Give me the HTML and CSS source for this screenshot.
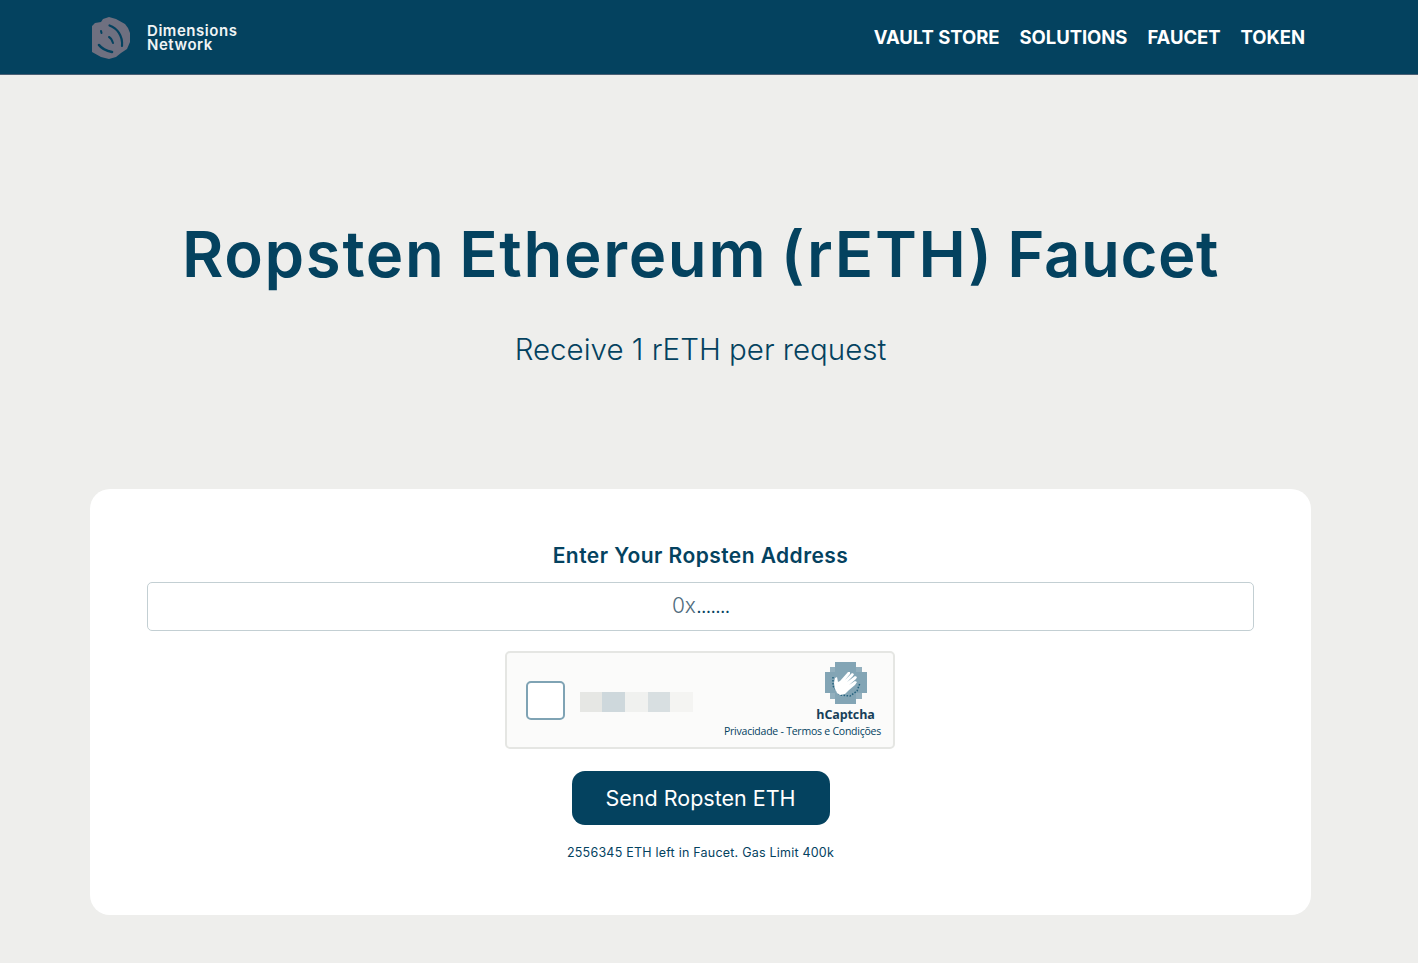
FILE: index.html
```html
<!DOCTYPE html>
<html lang="en">
<head>
<meta charset="utf-8">
<title>Ropsten Ethereum (rETH) Faucet</title>
<link rel="stylesheet" href="styles.css">
</head>
<body>
<header class="header">
  <a class="brand">
    <svg class="brand-mark" viewBox="0 0 40 44" width="40" height="44">
      <path fill="#6f7080" d="M1 10 4 7 10 6 12 3 18 1 25 3 34 8 37 12 39 17V26L36 33 30 37 25 41 18 43 10 41 1 36Z"/>
      <g fill="none" stroke="#04425f" stroke-linecap="round">
        <path stroke-width="2.200" d="M18.500 9.500C26 12 32 20 31 30"/>
        <path stroke-width="2.600" d="M8 29C11 33 16 35 21 36"/>
        <path stroke-width="2" d="M10 15l.500 2M18 21c2 1 3 3 4 6"/>
      </g>
    </svg>
    <span class="brand-name"><span>Dimensions</span><span>Network</span></span>
  </a>
  <nav class="nav">
    <a>VAULT STORE</a><a>SOLUTIONS</a><a>FAUCET</a><a>TOKEN</a>
  </nav>
</header>
<main class="main">
  <h1 class="title">Ropsten Ethereum (rETH) <span class="title-end">Faucet</span></h1>
  <p class="subtitle">Receive 1 rETH per request</p>
  <section class="card">
    <label class="label" for="address">Enter Your Ropsten Address</label>
    <div class="field" id="address"><span class="field-zero">0x</span><span class="field-dots">.......</span></div>
    <div class="captcha">
      <span class="checkbox"></span>
      <span class="mosaic"><i class="tile tile-warm"></i><i class="tile tile-blue"></i><i class="tile tile-pale"></i><i class="tile tile-cool"></i><i class="tile tile-faint"></i></span>
      <div class="captcha-brand">
        <svg class="captcha-logo" viewBox="0 0 42 42" width="42" height="42">
          <path fill="#83a5b5" d="M10 0H31V5H37V10H42V31H37V37H31V42H10V37H5V31H0V10H5V5H10Z"/>
          <path fill="#93b0be" d="M5 5h5v5H5zM31 5h6v5h-6zM5 31h5v6H5zM31 31h6v6h-6z"/>
          <path fill="none" stroke="#24617d" stroke-width="1.500" stroke-dasharray="1.500 1.500" d="M8 15v9l7 9 10 1 7-5 3-8"/>
          <path fill="#fff" d="M10 27 9 21 10 16 12 15 13 20 15 19 23 10 25 10 25 12 20 18 27 11 29 12 28 14 22 20 30 14 32 15 31 17 24 23 30 19 32 20 30 23 24 28 20 32 15 33 12 31Z"/>
        </svg>
        <strong class="captcha-name">hCaptcha</strong>
        <span class="captcha-links">Privacidade - Termos e Condições</span>
      </div>
    </div>
    <button class="send">Send Ropsten ETH</button>
    <p class="note">2556345 ETH left in Faucet. Gas Limit 400k</p>
  </section>
</main>
</body>
</html>
```
FILE: styles.css
```css
* { box-sizing: border-box; }
body {
  margin: 0;
  min-height: 963px;
  background: #eeeeec;
  color: #04425f;
  font-family: Inter, "Liberation Sans", sans-serif;
}
.header {
  display: flex;
  justify-content: space-between;
  align-items: center;
  height: 75px;
  padding: 0 113px 0 91px;
  background: #04425f;
  border-bottom: 1px solid #4b6075;
}
.brand { display: flex; align-items: center; gap: 16px; padding-top: 2px; color: #f0f4f5; }
.brand-name { display: flex; flex-direction: column; font-size: 15px; line-height: 14.500px; font-weight: 600; letter-spacing: 0.550px; }
.nav { display: flex; gap: 20px; color: #fff; font-size: 18.500px; font-weight: 700; letter-spacing: -0.050px; line-height: 24px; white-space: nowrap; }
.main { display: flex; flex-direction: column; align-items: center; padding: 0 107px 0 90px; }
.title { margin: 139px 0 0; font-size: 63.500px; line-height: 80px; font-weight: 600; letter-spacing: 1.650px; word-spacing: -4px; white-space: nowrap; }
.title-end { letter-spacing: 0.550px; }
.subtitle { margin: 35px 0 0; font-size: 29.500px; line-height: 40px; font-weight: 300; white-space: nowrap; }
.card {
  display: flex;
  flex-direction: column;
  align-items: center;
  width: 1221px;
  height: 426px;
  margin-top: 120px;
  padding: 52px 57px 0;
  border-radius: 20px;
  background: #fff;
}
.label { font-size: 21px; line-height: 30px; font-weight: 600; letter-spacing: 0.440px; }
.field {
  display: flex;
  align-items: center;
  justify-content: center;
  width: 100%;
  height: 49px;
  margin-top: 11px;
  padding-bottom: 2px;
  border: 1px solid #c3cfd3;
  border-radius: 5px;
  font-size: 21px;
  font-weight: 300;
  color: #516c7d;
}
.field-dots { color: #04425f; letter-spacing: -1.200px; }
.captcha {
  display: flex;
  align-items: center;
  width: 390px;
  height: 98px;
  margin: 20px 2px 0 0;
  padding: 0 11px 0 20px;
  border: 2px solid #e5e6e3;
  border-radius: 5px;
  background: #fbfbfa;
}
.checkbox { width: 39px; height: 39px; margin-left: -1px; border: 2px solid #7fa3b4; border-radius: 5px; background: #fff; }
.mosaic { display: flex; margin: 4px 0 0 15px; height: 20px; }
.tile { width: 22.700px; }
.tile-warm { background: #e6e7e4; }
.tile-blue { background: #ced8dc; }
.tile-pale { background: #f0f1ef; }
.tile-cool { background: #d8dfe1; }
.tile-faint { background: #f4f4f2; }
.captcha-brand { display: grid; justify-items: center; width: 158px; margin-left: auto; }
.captcha-logo { margin-left: 86px; }
.captcha-name { margin: 2px 0 0 86px; font: 700 12.500px/17px "Open Sans", sans-serif; color: #173f59; letter-spacing: -0.100px; }
.captcha-links { font: 400 10.500px/16px "Open Sans", sans-serif; letter-spacing: -0.230px; white-space: nowrap; }
.send {
  width: 258px;
  height: 54px;
  margin-top: 22px;
  padding: 0;
  border: 0;
  border-radius: 13px;
  background: #04425f;
  color: #fff;
  font: 400 21.500px/30px Inter, sans-serif;
}
.note { margin: 18px 0 0; font-size: 12.500px; line-height: 20px; letter-spacing: 0.220px; white-space: nowrap; }
```
